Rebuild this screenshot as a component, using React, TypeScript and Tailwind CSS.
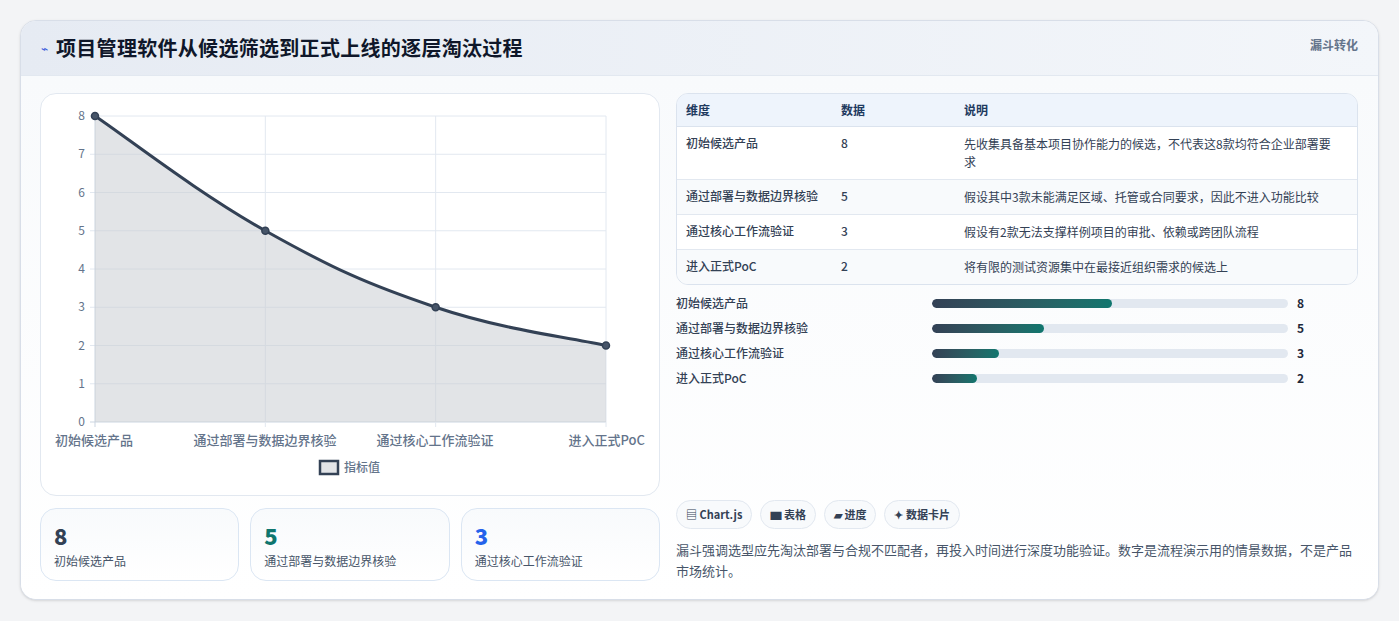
import React from "react";

const font = { fontFamily: '"Noto Sans CJK SC", "Noto Sans", sans-serif' };

const rows = [
  ["初始候选产品", "8", "先收集具备基本项目协作能力的候选，不代表这8款均符合企业部署要求"],
  ["通过部署与数据边界核验", "5", "假设其中3款未能满足区域、托管或合同要求，因此不进入功能比较"],
  ["通过核心工作流验证", "3", "假设有2款无法支撑样例项目的审批、依赖或跨团队流程"],
  ["进入正式PoC", "2", "将有限的测试资源集中在最接近组织需求的候选上"],
];

function Chart() {
  const X0 = 54, X1 = 565, Y0 = 328, Y1 = 22;
  const vals = [8, 5, 3, 2];
  const pts = vals.map((v, i) => [X0 + (i * (X1 - X0)) / 3, Y0 - (v * (Y0 - Y1)) / 8]);
  let d = `M${pts[0][0]},${pts[0][1]}`;
  for (let i = 0; i < pts.length - 1; i++) {
    const p0 = pts[Math.max(0, i - 1)], p1 = pts[i], p2 = pts[i + 1], p3 = pts[Math.min(3, i + 2)];
    const t = 0.2;
    const c1 = [p1[0] + (p2[0] - p0[0]) * t, p1[1] + (p2[1] - p0[1]) * t];
    const c2 = [p2[0] - (p3[0] - p1[0]) * t, p2[1] - (p3[1] - p1[1]) * t];
    d += ` C${c1[0]},${c1[1]} ${c2[0]},${c2[1]} ${p2[0]},${p2[1]}`;
  }
  const area = d + ` L${X1},${Y0} L${X0},${Y0} Z`;
  const labels = ["初始候选产品", "通过部署与数据边界核验", "通过核心工作流验证", "进入正式PoC"];
  const anchors = ["start", "middle", "middle", "end"] as const;
  const lx = [14, 224, 394, 604];
  return (
    <svg width="619" height="400" style={font}>
      {[0, 1, 2, 3, 4, 5, 6, 7, 8].map((v) => {
        const y = Y0 - (v * (Y0 - Y1)) / 8;
        return (
          <g key={v}>
            <line x1={X0 - 5} x2={X1} y1={y} y2={y} stroke={v === 0 ? "#cbd5e1" : "#e2e8f0"} />
            <text x={X0 - 10} y={y + 4} fontSize="12" fill="#64748b" textAnchor="end">{v}</text>
          </g>
        );
      })}
      {pts.map((p, i) => (
        <line key={i} x1={p[0]} x2={p[0]} y1={Y1} y2={Y0 + 5} stroke={i === 0 ? "#cbd5e1" : "#e2e8f0"} />
      ))}
      <path d={area} fill="rgba(203,206,211,0.55)" />
      <path d={d} fill="none" stroke="#334155" strokeWidth="3" />
      {pts.map((p, i) => (
        <circle key={i} cx={p[0]} cy={p[1]} r="3.5" fill="#475569" stroke="#334155" strokeWidth="1.5" />
      ))}
      {labels.map((l, i) => (
        <text key={i} x={lx[i]} y={351} fontSize="13" fontWeight="500" fill="#64748b" textAnchor={anchors[i]}>{l}</text>
      ))}
      <rect x="279" y="367" width="18" height="13" fill="#e2e4e7" stroke="#334155" strokeWidth="2.5" />
      <text x="303" y="378" fontSize="12" fontWeight="500" fill="#64748b">指标值</text>
    </svg>
  );
}

export default function App() {
  return (
    <div className="min-h-[621px] bg-[#f3f4f6] px-5 pt-5 pb-5" style={font}>
      <div className="rounded-2xl border border-[#d8dee8] bg-white overflow-hidden shadow-sm">
        <div className="h-[55px] flex items-center justify-between px-5 bg-gradient-to-r from-[#e6ebf3] to-[#f3f6fa] border-b border-[#e2e8f0]">
          <div className="flex items-center gap-2">
            <span className="text-[#3b5bdb] text-xs">⌁</span>
            <span className="text-[20px] font-bold text-[#0f172a] tracking-[0.3px]">项目管理软件从候选筛选到正式上线的逐层淘汰过程</span>
          </div>
          <span className="text-xs font-semibold text-[#64748b] self-start mt-4">漏斗转化</span>
        </div>
        <div className="flex gap-4 pl-[19px] pr-5 pt-[17px] pb-[18px] bg-gradient-to-b from-[#f8fafc] to-white">
          <div className="w-[620px] flex flex-col gap-3">
            <div className="h-[403px] rounded-2xl border border-[#e2e8f0] bg-white">
              <Chart />
            </div>
            <div className="grid grid-cols-3 gap-[11px]">
              {[
                ["8", "text-[#334155]", "初始候选产品"],
                ["5", "text-[#0f766e]", "通过部署与数据边界核验"],
                ["3", "text-[#2563eb]", "通过核心工作流验证"],
              ].map(([n, c, l]) => (
                <div key={l} className="h-[73px] rounded-2xl border border-[#dbe6f3] bg-gradient-to-b from-[#f8fafc] to-white px-[13px] pt-[12px]">
                  <div className={`text-[22px] font-extrabold leading-7 ${c}`}>{n}</div>
                  <div className="text-xs text-[#475569] mt-1">{l}</div>
                </div>
              ))}
            </div>
          </div>
          <div className="flex-1 flex flex-col">
            <div className="rounded-xl border border-[#dbe3ee] overflow-hidden text-xs">
              <div className="flex h-[33px] items-center bg-[#eef4fc] font-semibold text-[#1e3a5f] border-b border-[#dbe3ee]">
                <div className="w-[164px] pl-[9px]">维度</div>
                <div className="w-[123px]">数据</div>
                <div className="flex-1">说明</div>
              </div>
              {rows.map((r, i) => (
                <div key={i} className={`flex py-[8px] text-[#334155] ${i % 2 === 1 ? "bg-[#f8fafc]" : "bg-white"} ${i < 3 ? "border-b border-[#e2e8f0]" : ""}`}>
                  <div className="w-[164px] pl-[9px] font-medium">{r[0]}</div>
                  <div className="w-[123px] font-medium">{r[1]}</div>
                  <div className="flex-1 pr-4 leading-[18px]">{r[2]}</div>
                </div>
              ))}
            </div>
            <div className="mt-[9px] flex flex-col gap-[7px]">
              {rows.map((r) => (
                <div key={r[0]} className="flex items-center h-[18px] text-xs font-medium text-[#334155]">
                  <div className="w-[256px]">{r[0]}</div>
                  <div className="w-[356px] h-[9px] rounded-full bg-[#e2e8f0] overflow-hidden">
                    <div className="h-full rounded-full bg-gradient-to-r from-[#334155] to-[#0f766e]" style={{ width: `${(Number(r[1]) / 16) * 100 * 1.01}%` }} />
                  </div>
                  <div className="ml-[9px] font-bold text-[#1e293b]">{r[1]}</div>
                </div>
              ))}
            </div>
            <div className="flex-1" />
            <div className="flex gap-2 text-[11px] font-semibold text-[#334155]">
              {["▤ Chart.js", "▆ 表格", "▰ 进度", "✦ 数据卡片"].map((t) => (
                <span key={t} className="h-[29px] px-[9px] rounded-full border border-[#e2e8f0] bg-[#f8fafc] flex items-center">{t}</span>
              ))}
            </div>
            <p className="mt-[10px] text-[13px] leading-[21px] text-[#475569]">
              漏斗强调选型应先淘汰部署与合规不匹配者，再投入时间进行深度功能验证。数字是流程演示用的情景数据，不是产品市场统计。
            </p>
          </div>
        </div>
      </div>
    </div>
  );
}
